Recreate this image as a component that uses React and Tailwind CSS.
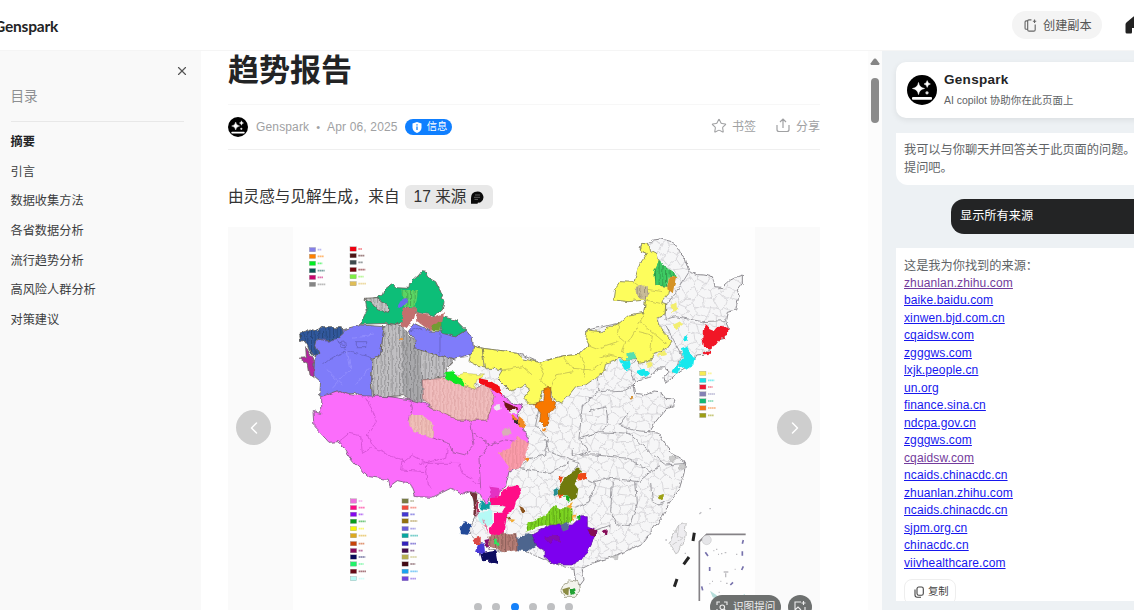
import React from "react";
import { X, Star, ChevronLeft, ChevronRight } from "lucide-react";

const toc = ["摘要", "引言", "数据收集方法", "各省数据分析", "流行趋势分析", "高风险人群分析", "对策建议"];

const sources = [
  ["zhuanlan.zhihu.com", true],
  ["baike.baidu.com", false],
  ["xinwen.bjd.com.cn", false],
  ["cqaidsw.com", false],
  ["zgggws.com", false],
  ["lxjk.people.cn", false],
  ["un.org", false],
  ["finance.sina.cn", false],
  ["ndcpa.gov.cn", false],
  ["zgggws.com", false],
  ["cqaidsw.com", true],
  ["ncaids.chinacdc.cn", false],
  ["zhuanlan.zhihu.com", false],
  ["ncaids.chinacdc.cn", false],
  ["sjpm.org.cn", false],
  ["chinacdc.cn", false],
  ["viivhealthcare.com", false],
];

function Logo({ className }) {
  return (
    <svg viewBox="0 0 30 30" className={className}>
      <circle cx="15" cy="15" r="15" fill="#000" />
      <path d="M11.5 7.5Q12.3 12.7 17.5 13.5Q12.3 14.3 11.5 19.5Q10.7 14.3 5.5 13.5Q10.7 12.7 11.5 7.5Z" fill="#fff" stroke="#fff" strokeWidth=".6" />
      <path d="M20.2 5.6Q20.7 8.6 23.4 9Q20.7 9.4 20.2 12.4Q19.7 9.4 17 9Q19.7 8.6 20.2 5.6Z" fill="#fff" stroke="#fff" strokeWidth=".5" />
      <circle cx="20" cy="17.8" r="1.6" fill="#ddd" />
      <rect x="5" y="22" width="20" height="2.8" rx="1" fill="#fff" />
    </svg>
  );
}

/* Irregular honeycomb used for the district borders. */
const jitter = (i, j, k) => {
  const v = Math.sin(i * 127.1 + j * 311.7 + k * 74.7) * 43758.5453;
  return (v - Math.floor(v) - 0.5) * 18;
};
const node = (i, j) =>
  `${(430 + i * 17 + jitter(i, j, 1)).toFixed(1)} ${(30 + j * 27 + ((i + j) % 2 ? 5 : -5) + jitter(i, j, 2)).toFixed(1)}`;
let mesh = "";
for (let i = 0; i < 58; i++) {
  for (let j = 0; j < 41; j++) {
    mesh += `M${node(i, j)}L${node(i + 1, j)}`;
    if ((i + j) % 2) mesh += `M${node(i, j)}L${node(i, j + 1)}`;
  }
}

const land =
  "M1050 70L1055 57L1080 55L1090 45L1115 42L1145 50L1165 65L1175 85L1190 105L1200 140L1225 149L1245 150L1270 155L1280 185L1300 188L1325 165L1345 155L1360 150L1360 175L1345 195L1350 210L1340 255L1315 262L1310 285L1318 310L1305 340L1285 345L1265 368L1245 388L1220 390L1210 410L1200 425L1165 445L1130 475L1125 458L1140 440L1125 428L1105 430L1085 455L1050 465L1035 480L1040 505L1070 510L1095 498L1115 500L1125 520L1158 522L1155 542L1130 552L1100 590L1080 620L1110 625L1130 660L1160 695L1190 715L1185 745L1170 795L1140 835L1120 875L1090 915L1060 955L1010 980L970 995L910 1015L880 1030L885 1065L870 1085L858 1060L855 1030L790 1015L690 970L640 980L600 970L560 945L545 930L545 900L560 870L550 800L600 700L650 520L500 450L470 440L505 400L540 395L555 365L580 370L680 382L750 412L820 393L870 388L900 360L893 315L990 295L1065 262L1070 225L985 220L1035 172L1075 85Z";

const legends = [
  [60, [74, 94, 115, 137, 157, 178], ["#8580e8", "#ff8000", "#00ee22", "#0b5552", "#c8066e", "#858585"]],
  [182, [72, 92, 112, 134, 155, 176], ["#ef0010", "#4d1515", "#3e4a4d", "#73060c", "#7ff044", "#dfbd57"]],
  [183, [828, 848, 868, 889, 911, 932, 956, 977, 996, 1017, 1039, 1061], ["#ee70dc", "#ff0a87", "#8408ee", "#079c1c", "#f5f50d", "#dda91d", "#c84408", "#88095c", "#09095a", "#22f26a", "#650a16", "#b5fbf5"]],
  [338, [828, 848, 868, 888, 911, 932, 956, 977, 996, 1017, 1039, 1061], ["#777b43", "#f14b3c", "#4338d2", "#92710d", "#6a5dd8", "#08a6a0", "#3322bc", "#430b4c", "#b6ad4f", "#420b14", "#1aa2ef", "#7043df"]],
  [1231, [445, 466, 486, 507, 528, 549, 571], ["#f5ec55", "#18e1e8", "#ed1733", "#8581b4", "#13b874", "#f47419", "#9d9e14"]],
];

function MapChart() {
  return (
    <svg viewBox="293 227 462 383" className="block h-[383px] w-[462px] bg-[#fefefe]">
      <defs>
        <clipPath id="land"><path d={land} /></clipPath>
        <filter id="rough" x="0" y="0" width="1" height="1">
          <feTurbulence type="fractalNoise" baseFrequency="0.16" numOctaves="2" seed="4" />
          <feDisplacementMap in="SourceGraphic" scale="4.5" xChannelSelector="R" yChannelSelector="G" />
          <feGaussianBlur stdDeviation="0.3" />
        </filter>
        <pattern id="stripe" width="11" height="11" patternUnits="userSpaceOnUse">
          <rect width="3" height="11" fill="#000" opacity=".22" />
        </pattern>
        <pattern id="soft" width="11" height="11" patternUnits="userSpaceOnUse">
          <rect width="4" height="11" fill="#b06060" opacity=".2" />
        </pattern>
      </defs>
      <g filter="url(#rough)">
        <g transform="translate(289 225) scale(.33333)" strokeLinejoin="round">
          <path d={land} fill="#f6f6f7" stroke="#8b898e" strokeWidth="3" />
          <g clipPath="url(#land)" fill="none">
            <path d={mesh} stroke="#cbcacf" strokeWidth="2" />
            <path d="M1200 141L1160 205L1130 240L1128 285L1160 275L1240 290L1310 287M1130 300L1180 395L1150 445M945 415L925 460L930 500L880 540L870 640L900 680L870 690M1070 510L1040 470L1020 430L1045 400M930 500L1010 495L1035 480M1020 560L990 600L1030 615L1075 620L1110 590M900 560L950 545L960 600L940 615M870 640L930 620L1020 625L1080 680L1130 720L1190 715M850 670L850 690L920 690L1020 700L1085 740L1110 725M770 645L780 680L830 700L870 715L850 740L910 770L970 760L1050 770L1085 740M690 730L720 700L770 690L775 640L740 600L750 550M690 730L780 745L840 710M970 770L965 860L985 900L1020 905L1045 835L1040 770M860 850L900 830L920 780L910 770M910 920L965 900M1085 775L1090 830L1110 840L1130 830" stroke="#8f8d93" strokeWidth="2.6" />
          </g>

          <g stroke="#68645d" strokeWidth="2.5">
            <path d="M75 340L160 315L215 300L285 305L275 390L250 400L245 450L250 518L215 512L195 502L175 508L150 497L105 515L92 510L95 470L72 450L78 400Z" fill="#7f7bfa" />
            <path d="M375 295L425 318L460 320L500 335L530 315L550 340L555 380L520 395L490 405L455 392L375 372L378 345L358 320Z" fill="#7f7bfa" />
            <path d="M210 298L225 280L235 260L230 228L280 210L285 195L308 177L320 188L360 190L362 175L390 150L397 140L415 143L420 160L440 170L450 190L465 230L460 255L435 272L400 265L385 262L350 245L340 290L325 300L300 295Z" fill="#0fbe78" />
            <path d="M455 295L460 275L500 285L530 315L500 335L460 325Z" fill="#0fbe78" />
            <path d="M32 330L60 312L85 318L98 308L160 308L163 325L140 345L110 347L85 342L80 362L90 385L75 395L60 375L55 355L35 350Z" fill="#30599d" />
            <path d="M50 365L68 395L75 410L75 460L60 450L55 415L30 400L52 398Z" fill="#b328a0" />
            <path d="M285 305L300 295L340 302L360 330L375 345L375 370L450 392L495 405L470 430L470 455L400 465L415 520L395 537L365 525L340 512L300 515L270 520L255 515L245 470L250 400L275 390Z" fill="#c0bfc2" />
            <path d="M225 220L265 218L300 245L298 262L270 255Z" fill="#c4c4c4" />
          </g>
          <path d="M340 302L360 330L375 345L375 370L395 378L400 465L415 520L395 537L340 512Z" fill="#a9a9ac" />
          <path d="M285 305L300 295L340 302L360 330L375 345L375 370L450 392L495 405L470 430L470 455L400 465L415 520L395 537L365 525L340 512L300 515L270 520L255 515L245 470L250 400L275 390Z" fill="url(#stripe)" />
          <path d="M225 220L265 218L300 245L298 262L270 255ZM32 330L60 312L85 318L98 308L160 308L163 325L140 345L110 347L85 342L80 362L90 385L75 395L60 375L55 355L35 350Z" fill="url(#stripe)" />
          <path d="M340 195H387L380 248L345 245Z" fill="#5bd664" />
          <path d="M340 195H387L380 248L345 245Z" fill="url(#stripe)" />
          <path d="M322 250L335 228L355 220L352 232L332 252Z" fill="#6868ee" />
          <path d="M345 248L382 250L375 280L355 310L335 300ZM382 262L435 275L465 265L460 290L425 318L385 290Z" fill="#c2706e" />
          <path d="M430 300L457 290L455 318L425 315Z" fill="#719c30" />
          <path d="M330 342h12v6h-12z" fill="#e59a45" />
          <path d="M100 420Q140 385 180 380L250 398M90 340L115 350L150 345L175 375M150 350L165 348L170 365L155 365ZM202 350H230V365H202ZM453 325V388M358 320L385 310L400 318" stroke="#5e5ab4" strokeWidth="2" fill="none" />
          <path d="M175 380L185 430L130 490M240 430L200 480M110 430L160 480M255 330L190 340" stroke="#9a97ff" strokeWidth="2" fill="none" />

          <path d="M95 515L150 497L175 508L215 512L300 515L365 525L405 535L505 585L595 585L605 545L610 515L590 490L635 500L660 530L700 540L685 570L695 595L720 645L685 730L660 740L650 785L605 815L590 840L570 805L545 800L520 807L485 790L430 817L380 815L365 775L325 767L300 785L295 763L240 755L200 720L180 695L165 665L145 650L120 652L95 625L75 605L72 560L95 565Z" fill="#fb6dfb" stroke="#7a5a7c" strokeWidth="2.5" />
          <path d="M365 525L370 550L360 590L380 620L435 640L480 655L490 680L530 690L555 660L550 625L570 635L600 660L570 700L575 790M600 660L650 645L720 655M550 625L545 590" stroke="#a355a1" strokeWidth="2.5" fill="none" />
          <path d="M230 520L250 555L262 590L235 630L250 665L310 695L345 710L370 690L415 715L410 740L335 735L340 700M150 650L180 625L215 632L220 685L245 670M415 715L510 715L520 745L550 760M390 717L470 700L475 670M410 740L415 780L430 790M575 780L545 770" stroke="#d04ed0" strokeWidth="2.5" fill="none" />
          <path d="M400 465L465 460L530 482L555 492L575 480L600 485L615 515L605 550L595 585L505 585L455 562L405 530Z" fill="#f0bdbd" stroke="#a06b70" strokeWidth="2" />
          <path d="M400 465L465 460L530 482L555 492L575 480L600 485L615 515L605 550L595 585L505 585L455 562L405 530Z" fill="url(#soft)" />
          <path d="M365 570H400L435 600L430 640L400 630L375 620L360 595Z" fill="#efbfb8" />
          <path d="M365 570H400L435 600L430 640L400 630L375 620L360 595Z" fill="url(#soft)" />
          <path d="M470 440L505 400L540 395L560 425L590 450L555 458L525 450L480 445Z" fill="#fcfcfc" />

          <g stroke="#817f54" strokeWidth="2.5">
            <path d="M580 370L680 382L705 402L750 412L820 393L870 388L900 360L890 340L895 315L935 320L990 295L1020 270L1065 262L1070 225L1020 230L975 225L980 190L995 170L1035 172L1050 120L1075 85L1050 75L1058 55L1080 57L1085 80L1105 90L1110 110L1100 180L1135 185L1145 175L1140 205L1115 235L1130 240L1128 270L1105 280L1115 310L1150 350L1135 370L1095 385L1080 410L1050 415L1040 400L1010 405L990 400L950 415L945 440L890 480L860 485L840 510L820 535L790 520L785 490L760 495L750 535L720 535L705 520L725 495L705 480L665 500L645 480L625 460L640 435L615 430L590 430Z" fill="#fdfd5c" />
            <path d="M555 365L580 370L585 425L570 425L540 410Z" fill="#fafa64" />
            <path d="M500 452L525 445L590 450L565 465L555 493L525 480Z" fill="#fafa64" strokeWidth="1" />
          </g>
          <path d="M750 412L765 440L755 470L780 490M820 393L850 430L910 435L940 415M870 388L890 420L885 455M785 490L800 450L850 440M640 435L700 425L730 450M990 295L985 330L1010 350L1000 385M1065 262L1055 290L1100 330L1130 355M1020 350L1055 290M1050 320L1090 330L1085 380M1035 172L1060 190L1120 200M1070 225L1110 235M900 360L925 370L985 350M930 400L960 390L980 395" stroke="#b5b150" strokeWidth="2" fill="none" />
          <path d="M465 445L490 442L530 475L525 485L470 460Z" fill="#07e821" />
          <path d="M570 460L595 465L630 480L640 510L605 490L570 475Z" fill="#f40d19" />
          <path d="M735 537L765 525L768 490L785 487L785 522L800 532L795 550L780 565V595L768 605L752 590L755 565L745 550Z" fill="#f87800" stroke="#985915" strokeWidth="2" />

          <g transform="translate(900 0)">
            <path d="M210 108L235 130L255 140L260 152L240 155L235 185L200 180L195 140Z" fill="#3ecb63" />
            <path d="M210 108L235 130L255 140L260 152L240 155L235 185L200 180L195 140Z" fill="url(#stripe)" />
            <path d="M240 155L262 152L255 185L252 202L235 190Z" fill="#d59328" />
            <path d="M140 185L175 180L182 205L165 225L140 205Z" fill="#c8bb98" />
            <path d="M140 185L175 180L182 205L165 225L140 205Z" fill="url(#stripe)" />
            <path d="M248 240L262 232L265 255L250 262ZM252 300L275 288L282 298L262 315ZM205 385L230 375V390L210 395ZM175 415L187 408V425L175 430Z" fill="#f3ee6e" />
            <path d="M280 345L290 330L302 347ZM276 370L295 362L302 385L316 400L313 420L290 435L266 418L282 400ZM250 442L262 418L274 430L267 447ZM143 437L165 431L184 445L167 455L148 450ZM90 406L122 406L127 427L108 436Z" fill="#15e8ed" />
            <path d="M112 385L135 380L143 400L115 405Z" fill="#58dfb0" />
            <path d="M342 315L350 297L360 312L375 318L385 305L418 308L417 330L405 335L408 343L395 340L382 358L365 370L345 368L340 340ZM345 382L365 375L362 387L345 388Z" fill="#f11628" />
            <path d="M123 513h8v10h-8z" fill="#d7963c" />
          </g>

          <g transform="translate(450 495)">
            <path d="M180 190L210 175L220 155L230 150L235 135L245 150L270 160L260 195L245 235L210 240L205 225Z" fill="#fa9caa" />
            <path d="M180 190L210 175L220 155L230 150L235 135L245 150L270 160L260 195L245 235L210 240L205 225Z" fill="url(#soft)" />
            <path d="M190 120L210 115L215 135L195 137Z" fill="#d9adb7" />
            <path d="M195 35L230 50L235 62L215 70L200 55Z" fill="#6e1919" />
            <path d="M215 75L232 80L240 100L225 92ZM240 78L260 95L257 114L236 110ZM310 115h11v9h-11zM253 202L270 205L262 215Z" fill="#f08a20" />
            <path d="M205 62L230 58L235 72L215 72ZM165 48L182 45L185 58L172 62Z" fill="#eee9ef" />
            <path d="M220 85L238 90L242 105L228 98Z" fill="#312b2d" />
            <path d="M155 290L185 295L180 320L155 330Z" fill="#e333c2" />
            <path d="M185 320L190 300L215 290L240 285L245 310L230 335L225 360L205 370L200 400L190 435L160 440L150 420L165 395L165 370L190 368L200 350L185 345L155 345V325Z" fill="#ff0a87" />
            <path d="M95 305L115 312L110 380L103 375L105 335Z" fill="#713239" />
            <path d="M114 335L120 335L120 375L112 380Z" fill="#ae355c" />
            <path d="M123 328L140 345L155 330V360L125 358Z" fill="#109da0" />
            <path d="M115 370L160 360V400L145 410L120 392Z" fill="#b5faf6" />
            <path d="M130 385L145 410L148 428L135 405Z" fill="#e4799b" />
            <path d="M63 415L80 390L99 410L87 434L66 432Z" fill="#244898" />
            <path d="M98 447L125 440V462L105 462Z" fill="#dc4a46" />
            <path d="M133 450L158 445L152 472L140 470Z" fill="#870d70" />
            <path d="M118 462L135 460L138 490L108 485Z" fill="#4939d8" />
            <path d="M123 490L170 483L177 524L155 519L148 512L130 514Z" fill="#0d0860" />
            <path d="M145 440L190 430H235L240 480L195 487L150 465Z" fill="#b57c74" />
            <path d="M145 440L190 430H235L240 480L195 487L150 465Z" fill="url(#stripe)" />
            <path d="M165 460L170 440L182 465L175 475Z" fill="#33e35b" />
            <path d="M235 445L265 430L300 445L295 465L265 485L235 480Z" fill="#4d658e" />
            <path d="M260 425L270 395L310 380L340 355L350 345L365 355H400L402 390L380 405H335L300 412Z" fill="#7bd420" />
            <path d="M260 425L270 395L310 380L340 355L350 345L365 355H400L402 390L380 405H335L300 412Z" fill="url(#stripe)" />
            <path d="M280 435L335 405H400L425 380H445V410L475 425L460 455L435 505L405 522H340L315 500V480L295 470Z" fill="#7d03ef" stroke="#5d1699" strokeWidth="2" />
            <path d="M315 440L360 435L365 455L345 450L335 462Z" fill="#8208b1" />
            <path d="M365 405L388 395L390 415L370 422Z" fill="#59679a" />
            <path d="M363 285L378 263L400 248L415 230L427 240L417 270L407 280L418 295L414 322L400 333L385 318L363 318L356 300Z" fill="#707a0b" />
            <path d="M356 258L373 262L365 280ZM420 250L442 248L440 267L418 272ZM358 310L370 318L365 326Z" fill="#ef4918" />
            <path d="M340 300L355 292L358 315L345 318Z" fill="#288f93" />
            <path d="M370 320L390 318L392 337ZM408 385L422 375L425 388Z" fill="#12af1c" />
            <path d="M380 352L405 335L395 358ZM398 375L410 370L403 395ZM208 390L232 392L220 402Z" fill="#f3ac32" />
            <path d="M240 350L265 362L250 370ZM200 378L215 380L210 390Z" fill="#8b531e" />
            <path d="M445 418L475 420L470 442L455 435ZM488 423L504 418L500 436Z" fill="#850957" />
            <path d="M375 580L395 570L420 575L425 600L405 622L375 622L365 602Z" fill="#f4f4ec" stroke="#828264" strokeWidth="2" />
            <path d="M370 598L390 592L388 618L375 612Z" fill="#8b8b43" />
            <path d="M392 598L408 595L410 610L395 615Z" fill="#21a131" />
          </g>
          <g transform="translate(900 495)">
            <path d="M250 440L270 403L292 397L287 445L262 493L240 460Z" fill="#eeedf0" stroke="#aaa" strokeWidth="2" />
            <path d="M253 420L278 445L250 465M270 403L265 440" stroke="#bbb" strokeWidth="2" fill="none" />
            <path d="M206 318L225 311L221 329L210 331Z" fill="#9ea219" />
            <path d="M240 200L262 198V212L245 215ZM65 500L88 495L85 507ZM272 225L288 222L283 238L270 237Z" fill="#ccc" stroke="#999" />
          </g>
        </g>
      </g>
      <g transform="translate(590 390) scale(.33333)">
        <path d="M313 428L309 453M297 501L281 523M261 567L253 590" stroke="#252525" strokeWidth="9" />
        <path d="M467 433H350L328 455V633" stroke="#858286" strokeWidth="5" fill="none" />
        <circle cx="350" cy="450" r="14" fill="#e5e5e8" stroke="#aaa" />
        <path d="M460 450L457 461M346 487L354 498M457 484V497M359 531V543M460 529L455 540M429 577L421 585M335 589L338 601" stroke="#7772ac" strokeWidth="5" />
        <path d="M370 482h3M378 478h4M393 491h4M404 488h5M384 493h3M438 493h4M401 546h14M407 550v12M434 538h3M366 574h3M358 581h3M391 574h3M408 580h5M386 607h3M328 372l6-5M358 356h5M226 450h5M284 490h4" stroke="#bdbcc0" strokeWidth="4" />
        <path d="M360 602L380 616L385 628L368 622ZM445 622L465 612V622Z" fill="#b7dedb" />
      </g>
      <g transform="translate(289.3 225) scale(.33333)">
        {legends.map(([x, ys, colors]) =>
          ys.map((y, i) => (
            <g key={x + "-" + y}>
              <rect x={x} y={y - 6.5} width="19" height="13" fill={colors[i]} stroke="#999" strokeWidth="1" />
              <path d={`M${x + 25} ${y}h${12 + ((i * 7) % 12)}`} stroke={colors[i]} strokeWidth="5" strokeDasharray="5 1" opacity=".55" />
            </g>
          ))
        )}
      </g>
    </svg>
  );
}

export default function App() {
  return (
    <div className="flex h-[610px] w-[1134px] flex-col overflow-hidden bg-white font-['Liberation_Sans','Noto_Sans_CJK_SC',sans-serif] text-[#232425]">
      <header className="flex h-[51px] shrink-0 items-center justify-between border-b border-[#f5f5f5]">
        <div className="-ml-[6px] mt-[3px] font-[Lato,sans-serif] text-[15.5px] font-bold tracking-[-0.2px]">Genspark</div>
        <div className="-mr-[11px] flex shrink-0 items-center gap-[23px]">
          <button className="flex h-7 w-[90px] items-center gap-[5px] rounded-full bg-[#f4f4f4] pl-[11px] text-[12.2px] text-[#555]">
            <svg viewBox="0 0 16 16" className="h-[15px] w-[15px] shrink-0" fill="none" stroke="#666" strokeWidth="1.2">
              <path d="M9 2H6.2Q5 2 5 3.2V12.5Q5 14 6.5 14H11.5Q13 14 13 12.5V7M4.8 3H3.5Q2.2 3 2.2 4.3V10.8Q2.2 12 3.5 12H5M12.3 1.7V5.3M10.5 3.5H14.1" />
            </svg>
            <span className="mt-[2px] whitespace-nowrap">创建副本</span>
          </button>
          <svg viewBox="0 0 20 20" className="h-5 w-5 shrink-0" fill="#222"><path d="M8.3 1.8Q10 .5 11.7 1.8L18.3 7.2Q19.5 8.2 19.5 9.6V17Q19.5 18.5 18 18.5H14Q13 18.5 13 17V13H7V17Q7 18.5 6 18.5H2Q.5 18.5.5 17V9.6Q.5 8.2 1.7 7.2Z" /></svg>
        </div>
      </header>

      <div className="flex min-h-0 flex-1">
        <aside className="flex w-[201px] shrink-0 flex-col bg-[#f9f9f9] pl-[10.5px] pr-[17px]">
          <div className="-mr-[5px] flex h-[37px] items-end justify-end pb-[10px]"><X size={14} strokeWidth={2} color="#555" /></div>
          <div className="-mt-[1px] h-[35px] border-b border-[#e8e8e8] text-[13.6px] leading-[20px] text-[#8d8f92]">目录</div>
          <nav className="mt-[6px] flex flex-col text-[12.2px] leading-[29.65px] text-[#3c3d3f]">
            {toc.map((t, i) => (
              <a key={t} className={i === 0 ? "font-bold text-[#232425]" : ""}>{t}</a>
            ))}
          </nav>
        </aside>

        <main className="flex min-w-0 flex-1 flex-col pl-[27px] pr-12">
          <h1 className="h-[53px] text-[31px] font-bold leading-[40px]">趋势报告</h1>
          <div className="flex h-[46px] shrink-0 items-center border-y border-b-[#efefef] border-t-[#f7f7f7] text-[12px] text-[#a0a1a3]">
            <Logo className="h-5 w-5" />
            <span className="ml-2 whitespace-nowrap tracking-[0.15px]">Genspark</span>
            <span className="ml-[7px] text-[11px]">•</span>
            <span className="ml-[7px] whitespace-nowrap tracking-[0.15px]">Apr 06, 2025</span>
            <span className="ml-[7px] flex h-4 w-[47px] items-center gap-[5px] whitespace-nowrap rounded-full bg-[#0f7fff] pl-[7px] text-[10.3px] text-white">
              <svg viewBox="0 0 10 11" className="h-[11px] w-[10px] shrink-0"><path d="M5 0L9.5 1.5V5.5Q9.5 9 5 11Q.5 9 .5 5.5V1.5Z" fill="#fff" /><path d="M5 2.3V3.6M5 4.6V8" stroke="#0f7fff" strokeWidth="1.3" /></svg>
              信息
            </span>
            <span className="ml-auto flex items-center gap-[5px]"><Star size={16} strokeWidth={1.6} className="-mt-[3px]" />书签</span>
            <span className="ml-[20px] flex items-center gap-[6px]">
              <svg viewBox="0 0 14 15" className="-mt-[3px] h-[15px] w-[14px]" fill="none" stroke="#a0a1a3" strokeWidth="1.2"><path d="M1 7V11.5Q1 13.5 3 13.5H11Q13 13.5 13 11.5V7M7 10V1M4 4L7 1L10 4" /></svg>
              分享
            </span>
          </div>
          <div className="mt-[35px] flex h-6 shrink-0 items-center whitespace-nowrap text-[15.6px] text-[#333]">
            由灵感与见解生成，来自
            <span className="ml-[5px] flex h-6 w-[88px] items-center gap-[4px] rounded-md bg-[#e8e8e8] pl-[9px]">
              17 来源
              <svg viewBox="0 0 14 13" className="h-[13px] w-[14px] shrink-0"><path d="M7.5.5A5.8 5.8 0 0 1 11 11Q9.5 12 8 11.5L7.5 12.8H1V7Q1 .5 7.5.5Z" fill="#0b0b0b" /><path d="M5 4H10M4 6.3H10M4.5 8.4H8" stroke="#777" strokeWidth=".8" /></svg>
            </span>
          </div>
          <section className="relative mt-[18px] flex h-[383px] w-[592px] shrink-0 justify-center bg-[#fafafa]">
            <MapChart />
            <div className="absolute bottom-0 right-[-45px] h-[90px] w-[220px] bg-[radial-gradient(closest-side_at_50%_100%,rgba(0,0,0,0.09),transparent)]" />
            <button className="absolute left-2 top-[183px] flex h-[35px] w-[35px] items-center justify-center rounded-full bg-[#cecece] text-white"><ChevronLeft size={20} strokeWidth={1.8} /></button>
            <button className="absolute right-2 top-[183px] flex h-[35px] w-[35px] items-center justify-center rounded-full bg-[#cecece] text-white"><ChevronRight size={20} strokeWidth={1.8} /></button>
            <div className="absolute left-[246px] top-[376px] flex gap-[10.3px]">
              {[0, 1, 2, 3, 4, 5].map((d) => (
                <i key={d} className={d === 2 ? "h-2 w-2 rounded-full bg-[#1481fa]" : "h-2 w-2 rounded-full bg-[#bfc0c2]"} />
              ))}
            </div>
            <div className="absolute left-[482px] top-[368px] flex h-6 w-[71px] items-center gap-[5px] whitespace-nowrap rounded-full bg-[#6d706f] pl-[6px] text-[10.6px] text-[#eee]">
              <svg viewBox="0 0 12 12" className="h-3 w-3 shrink-0" fill="none" stroke="#eee" strokeWidth="1.1"><path d="M1 4V1H4M8 1H11V4M1 8V11H4M11 11L8 8" /><circle cx="6.3" cy="6.3" r="2.3" /></svg>
              识图提问
            </div>
            <div className="absolute left-[560px] top-[368px] flex h-6 w-6 items-center justify-center rounded-full bg-[#6d706f]">
              <svg viewBox="0 0 12 12" className="h-3 w-3" fill="none" stroke="#eee" strokeWidth="1.1"><path d="M7 1H1V11H11V6M1 9L4 6L7 9M9.5 0V4M7.5 2H11.5" /></svg>
            </div>
          </section>
        </main>

        <div className="flex w-[14px] shrink-0 flex-col items-center bg-[#fcfcfc] pt-[7px]">
          <svg viewBox="0 0 10 7" className="h-[7px] w-[10px]"><path d="M4 .8Q5 0 6 .8L9.5 5.5Q9.5 7 8.5 7H1.5Q.5 7 .5 5.5Z" fill="#858585" /></svg>
          <div className="mt-[13px] h-[45px] w-2 rounded-full bg-[#8b8b8b]" />
        </div>

        <aside className="flex w-[252px] shrink-0 flex-col overflow-hidden bg-[#edf1f4] pl-[14px] pt-[11px] text-[12.2px] leading-[17.5px] text-[#606366]">
          <div className="flex h-[56px] w-[260px] shrink-0 items-center gap-[7px] rounded-[10px] bg-white pl-[11px] shadow-[0_2px_6px_rgba(0,0,0,0.08)]">
            <Logo className="h-[30px] w-[30px]" />
            <div className="flex flex-col">
              <b className="text-[13.5px] leading-[18px] tracking-[0.3px] text-[#232425]">Genspark</b>
              <span className="mt-[3px] whitespace-nowrap text-[10.45px] leading-[18px]">AI copilot 协助你在此页面上</span>
            </div>
          </div>
          <div className="mt-[15px] h-[52px] w-[260px] shrink-0 rounded-bl-xl bg-white pl-2 pt-[9px]">
            <p className="whitespace-nowrap">我可以与你聊天并回答关于此页面的问题。<br />提问吧。</p>
          </div>
          <div className="ml-[55px] mt-[14px] flex h-[35px] w-[220px] shrink-0 items-center rounded-l-[13px] bg-[#232425] pl-[9px] pt-px text-white">显示所有来源</div>
          <div className="mt-[14px] h-[353px] w-[260px] shrink-0 overflow-hidden bg-white pl-2 pt-[9.5px]">
            <p>这是我为你找到的来源：</p>
            <div className="flex flex-col items-start">
              {sources.map(([s, visited], i) => (
                <a key={i} className={visited ? "h-[17.47px] text-[12px] tracking-[0.12px] text-[#733b9c] underline" : "h-[17.47px] text-[12px] tracking-[0.12px] text-[#1717ee] underline"}>{s}</a>
              ))}
            </div>
            <button className="mt-[7px] flex h-[26px] w-[52px] items-center gap-1 whitespace-nowrap rounded-lg border border-[#eee] pl-[9px] text-[10.3px] text-[#444]">
              <svg viewBox="0 0 10 12" className="h-3 w-[10px] shrink-0" fill="none" stroke="#444" strokeWidth="1.1"><rect x="3" y="1" width="6.3" height="8.3" rx="1.8" /><path d="M1 3.5V9Q1 11.2 3.2 11.2H7" /></svg>
              复制
            </button>
          </div>
        </aside>
      </div>
    </div>
  );
}
